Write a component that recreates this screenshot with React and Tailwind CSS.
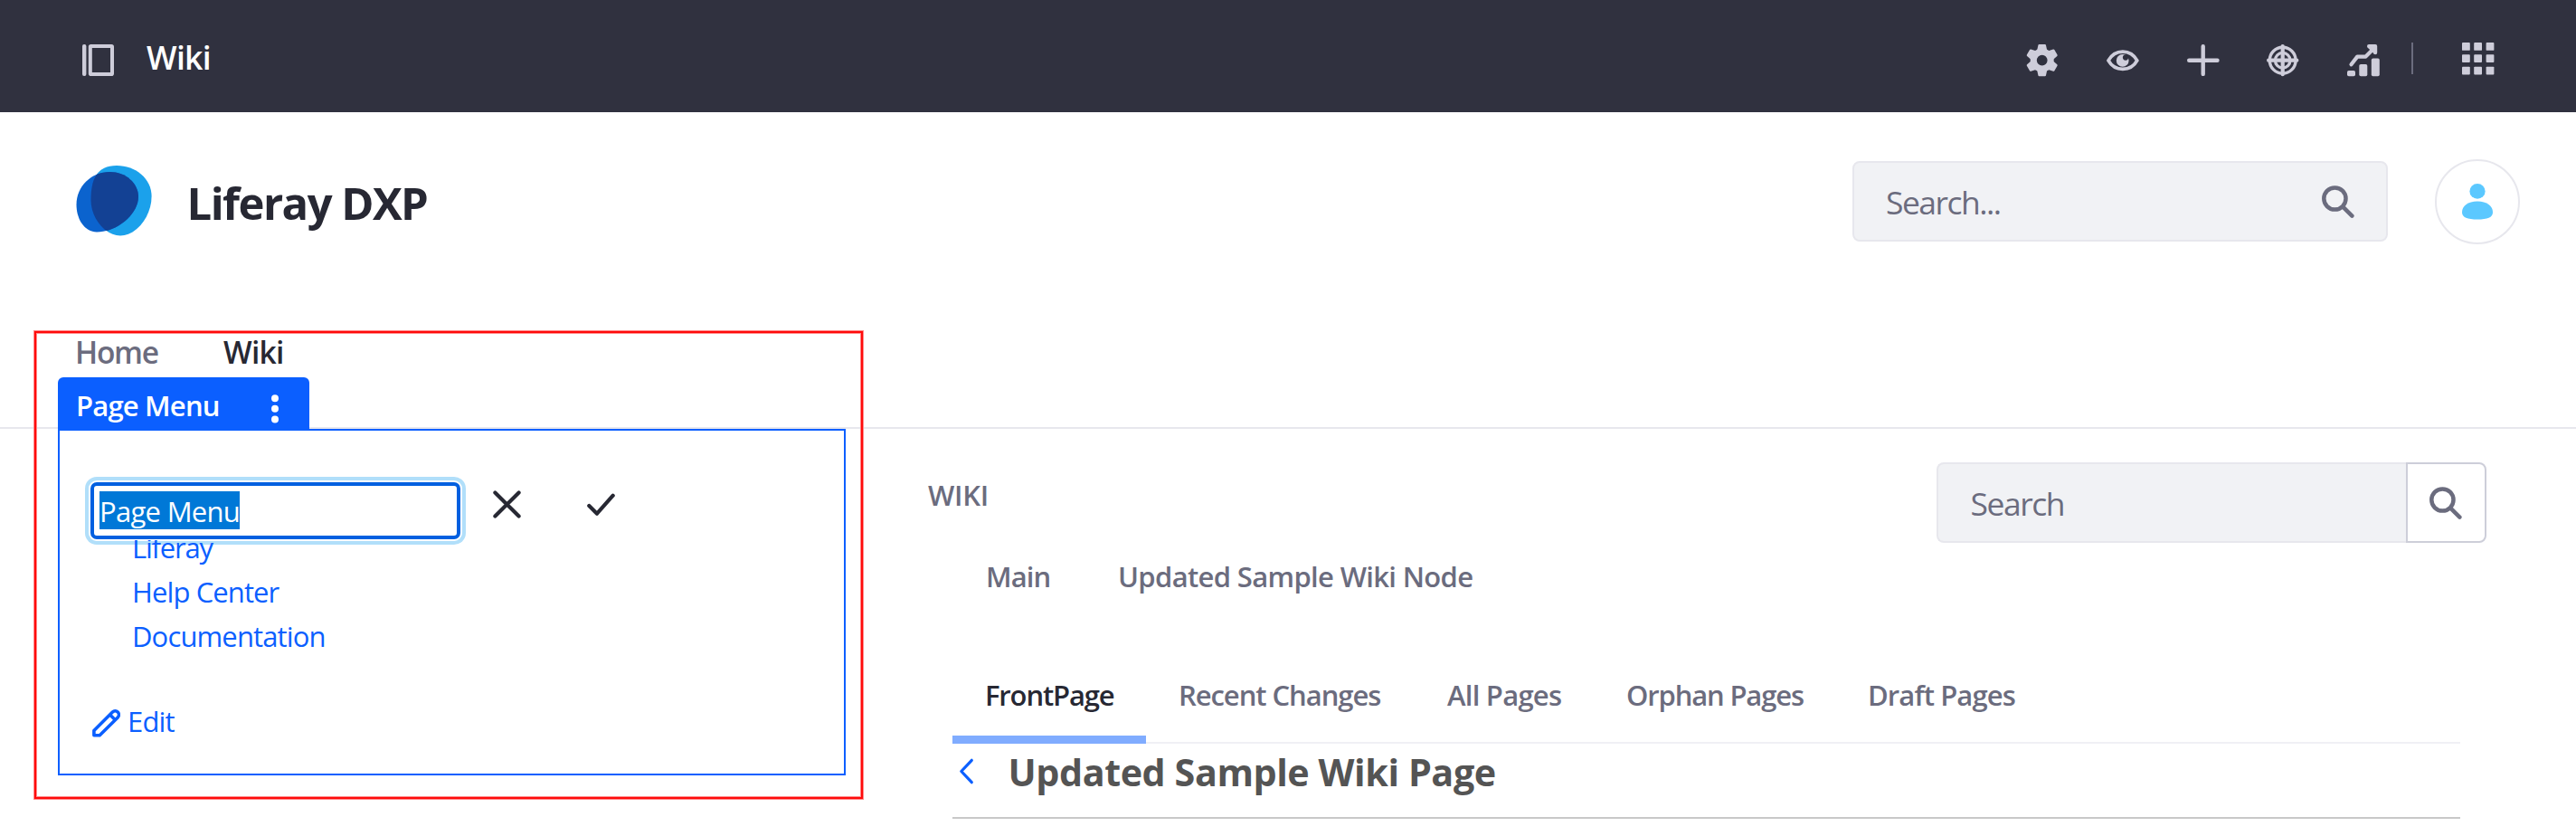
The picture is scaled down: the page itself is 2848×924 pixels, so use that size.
import React from "react";

const SidebarIcon = () => (
  <svg width="36" height="36" viewBox="0 0 36 36" className="text-[#cecdda]">
    <rect x="0" y="0" width="4.4" height="35" rx="2" fill="currentColor" />
    <rect x="8.8" y="2" width="24.2" height="31" rx="0.8" fill="none" stroke="currentColor" strokeWidth="4" strokeLinejoin="round" />
  </svg>
);

const GearIcon = () => (
  <svg width="36" height="36" viewBox="0 0 36 36" fill="#cecdda">
    <path
      fillRule="evenodd"
      d="M17.7 4.6a13 13 0 1 0 0 26 13 13 0 0 0 0-26Zm0 7.1a5.9 5.9 0 1 1 0 11.8 5.9 5.9 0 0 1 0-11.8Z"
    />
    {[0, 60, 120, 180, 240, 300].map((a) => (
      <path key={a} transform={`rotate(${a} 17.7 17.6)`} d="M13.4.9Q13.6 0 14.5 0H20.9Q21.8 0 22 .9L23.2 6.5H12.2Z" />
    ))}
  </svg>
);

const EyeIcon = () => (
  <svg width="36" height="36" viewBox="0 0 36 36" fill="none">
    <path d="M2 17.9C5.5 11.6 11 8.1 17.9 8.1S30.3 11.6 33.8 17.9C30.3 24.2 24.8 27.3 17.9 27.3S5.5 24.2 2 17.9Z" stroke="#cecdda" strokeWidth="3.8" strokeLinejoin="round" />
    <circle cx="17.7" cy="17.9" r="6.9" fill="#cecdda" />
    <circle cx="21" cy="14.6" r="3.1" fill="#30313f" />
  </svg>
);

const PlusIcon = () => (
  <svg width="36" height="36" viewBox="0 0 36 36" stroke="#cecdda" strokeWidth="4.4" strokeLinecap="round">
    <path d="M17.7 2.2V32.9M2.2 17.7H33.5" />
  </svg>
);

const TargetIcon = () => (
  <svg width="36" height="36" viewBox="0 0 36 36" fill="none" stroke="#cecdda">
    <circle cx="17.7" cy="17.7" r="14.4" strokeWidth="3.4" />
    <circle cx="17.7" cy="17.7" r="8.3" strokeWidth="3.2" />
    <path d="M17.7 2.1V33.2M2.1 17.7H33.3" strokeWidth="4.2" strokeLinecap="round" />
  </svg>
);

const ChartIcon = () => (
  <svg width="36" height="36" viewBox="0 0 36 36" fill="#cecdda">
    <rect x="0" y="29" width="9" height="6.2" rx="1.8" />
    <rect x="13.3" y="22" width="9" height="13.2" rx="1.8" />
    <rect x="26.8" y="15.6" width="9" height="19.6" rx="1.8" />
    <path d="M4.5 22.3L11.2 13.6H20.5L29.5 4.6" fill="none" stroke="#cecdda" strokeWidth="4.2" strokeLinecap="round" strokeLinejoin="round" />
    <path d="M24 0H31.2Q33.2 0 33.2 2V9.2Q33.2 11.2 31.2 11.2Q29.2 11.2 28.4 9L23 4Q22 3.6 22 2Q22 0 24 0Z" />
  </svg>
);

const GridIcon = () => (
  <svg width="36" height="36" viewBox="0 0 36 36" fill="#cecdda">
    {[0, 13.2, 26.7].map((y) =>
      [0, 13.2, 26.6].map((x) => <rect key={`${x}-${y}`} x={x} y={y} width="8.8" height="8.8" rx="0.9" />)
    )}
  </svg>
);

const SearchIcon = () => (
  <svg width="36" height="36" viewBox="0 0 36 36" fill="none" stroke="#6b6c7e" className="shrink-0">
    <circle cx="14.4" cy="14.5" r="12.1" strokeWidth="4.5" />
    <path d="M23.6 23.8L33.4 33.6" strokeWidth="4.5" strokeLinecap="round" />
  </svg>
);

const Logo = () => (
  <svg width="84" height="80" viewBox="84 182 84 80" className="shrink-0">
    <defs>
      <clipPath id="front">
        <path d="M84.5 226C84.5 206 101 190 121.5 190C139 190 153 202.5 153 217.5C153 237 129 256.5 107 256.5C94 256.5 84.5 243 84.5 226Z" />
      </clipPath>
    </defs>
    <path d="M129 183C150 183 167.6 197.5 167.6 217C167.6 239 151 260.5 133 260.5C117 260.5 100.5 242 100.5 221C100.5 198 107 183 129 183Z" fill="#1ba1eb" />
    <path d="M84.5 226C84.5 206 101 190 121.5 190C139 190 153 202.5 153 217.5C153 237 129 256.5 107 256.5C94 256.5 84.5 243 84.5 226Z" fill="#0b63ce" />
    <path clipPath="url(#front)" d="M129 183C150 183 167.6 197.5 167.6 217C167.6 239 151 260.5 133 260.5C117 260.5 100.5 242 100.5 221C100.5 198 107 183 129 183Z" fill="#134194" />
  </svg>
);

const UserIcon = () => (
  <svg width="34" height="40" viewBox="0 0 34 40" fill="#5bc8ff">
    <ellipse cx="17" cy="8.4" rx="8.6" ry="8.4" />
    <path d="M0 31.5C0 24.5 6.5 19.5 17 19.5S34 24.5 34 31.5C34 37.5 28 39.5 17 39.5S0 37.5 0 31.5Z" />
  </svg>
);

const PencilIcon = () => (
  <svg width="31" height="32" viewBox="0 0 31 32" fill="none" stroke="#0b5fff" strokeWidth="3.6" strokeLinejoin="round" className="shrink-0">
    <path d="M1.9 29.7V24.6L22.4 4.1A4.1 4.1 0 0 1 28.2 9.9L8.2 29.7Z" />
    <path d="M19.6 7L25.2 12.6" />
  </svg>
);

const tabs = [
  { label: "FrontPage", cls: "w-[214px] border-b-[9px] border-[#80acff] text-[#272833] tracking-[-1.14px]" },
  { label: "Recent Changes", cls: "w-[297px] tracking-[-1.06px]" },
  { label: "All Pages", cls: "w-[198px] tracking-[-0.74px]" },
  { label: "Orphan Pages", cls: "w-[267px] tracking-[-1.15px]" },
  { label: "Draft Pages", cls: "tracking-[-0.9px]" },
];

function ControlBar() {
  return (
    <header className="flex h-[124px] items-start bg-[#30313f] pr-[90px] pl-[91px]">
      <div className="pt-[49px]"><SidebarIcon /></div>
      <h1 className="ml-[35px] pt-[39px] text-[35.5px] leading-[48px] font-semibold tracking-[-0.67px] text-white">Wiki</h1>
      <div className="ml-auto flex gap-[52.75px] pt-[49px]">
        <GearIcon />
        <EyeIcon />
        <PlusIcon />
        <TargetIcon />
        <ChartIcon />
      </div>
      <div className="mt-[47px] ml-[35px] h-[35px] w-[2px] bg-[#6b6c7e]" />
      <div className="ml-[54px] pt-[47px]"><GridIcon /></div>
    </header>
  );
}

function SiteHeader() {
  return (
    <div className="flex h-[350px] flex-col border-b-2 border-[#e7e7ed]">
      <div className="flex h-[240px] items-start pr-[62px] pl-[84px]">
        <div className="mt-[58px]"><Logo /></div>
        <span className="mt-[70px] ml-[38.5px] text-[49px] leading-[60px] font-bold tracking-[-1.54px] text-[#272833]">Liferay DXP</span>
        <div className="mt-[54px] ml-auto flex h-[89px] w-[592px] items-center justify-between rounded-[8px] border-2 border-[#e7e7ed] bg-[#f1f2f5] pr-[35px] pl-[35px]">
          <span className="text-[35.5px] leading-[48px] tracking-[-1.53px] text-[#6b6c7e]">Search...</span>
          <SearchIcon />
        </div>
        <div className="mt-[52px] ml-[52px] flex h-[94px] w-[94px] items-center justify-center rounded-full border-2 border-[#e7e7ed]">
          <UserIcon />
        </div>
      </div>
      <nav className="flex pl-[83px] text-[33.5px] leading-[44px] font-semibold text-[#6b6c7e]">
        <a className="mt-[3px] w-[164px] tracking-[-1.27px]">Home</a>
        <a className="mt-[3px] tracking-[-0.7px] text-[#272833]">Wiki</a>
      </nav>
    </div>
  );
}

function PageMenu() {
  return (
    <section className="relative ml-[64px] h-[383px] w-[871px] border-2 border-[#0b5fff]">
      <div className="absolute -top-[59px] -left-[2px] flex h-[59px] w-[278px] rounded-t-[6px] bg-[#0b5fff] pr-[34px] pl-[20px]">
        <span className="mt-[9px] text-[31px] leading-[44px] font-semibold tracking-[-0.81px] whitespace-nowrap text-white">Page Menu</span>
        <svg width="8" height="32" viewBox="0 0 8 32" fill="#fff" className="mt-[18.5px] ml-auto">
          <circle cx="4" cy="4.2" r="4" />
          <circle cx="4" cy="15.8" r="4" />
          <circle cx="4" cy="27.5" r="4" />
        </svg>
      </div>
      <div className="flex pt-[57px] pl-[34px]">
        <div className="flex h-[63px] w-[409px] rounded-[7px] border-4 border-[#0060e0] bg-white pl-[6px] shadow-[0_0_0_2px_#fff,0_0_0_6px_#b1dffa]">
          <span className="mt-[6px] h-[42px] w-[155px] bg-[#0078d7] text-[31px] leading-[44px] tracking-[-0.7px] whitespace-nowrap text-white">Page Menu</span>
        </div>
        <svg width="31" height="31" viewBox="0 0 31 31" fill="none" stroke="#272833" strokeWidth="4.2" strokeLinecap="round" className="mt-[9px] ml-[36px]">
          <path d="M2.4 2.4L28.6 28.6M28.6 2.4L2.4 28.6" />
        </svg>
        <svg width="31" height="31" viewBox="0 0 31 31" fill="none" stroke="#272833" strokeWidth="4.2" strokeLinecap="round" strokeLinejoin="round" className="mt-[9px] ml-[73px]">
          <path d="M2.3 17L11 25.7L28.7 5.7" />
        </svg>
      </div>
      <ul className="relative -mt-[15px] ml-[80px] text-[31px] leading-[49px] text-[#0b5fff] [clip-path:inset(16px_0_0_0)]">
        <li className="tracking-[-1.2px]">Liferay</li>
        <li className="tracking-[-0.89px]">Help Center</li>
        <li className="tracking-[-0.87px]">Documentation</li>
      </ul>
      <a className="mt-[47px] ml-[36px] flex items-start text-[#0b5fff]">
        <span className="mt-[8px]"><PencilIcon /></span>
        <span className="ml-[8px] text-[31px] leading-[44px] tracking-[-0.8px]">Edit</span>
      </a>
    </section>
  );
}

function WikiContent() {
  return (
    <section className="ml-[91px] flex w-[1723px] flex-col pt-[37px]">
      <div className="flex justify-between">
        <h2 className="mt-[14px] text-[31px] leading-[44px] font-semibold tracking-[-0.23px] text-[#6b6c7e]">WIKI</h2>
        <div className="flex h-[89px] w-[608px]">
          <div className="flex flex-1 items-center rounded-l-[8px] border-2 border-r-0 border-[#e7e7ed] bg-[#f1f2f5] pl-[35.5px]">
            <span className="text-[35.5px] leading-[48px] tracking-[-1.47px] text-[#6b6c7e]">Search</span>
          </div>
          <div className="flex w-[89px] items-center rounded-r-[8px] border-2 border-[#cdced9] bg-white pl-[24px]">
            <SearchIcon />
          </div>
        </div>
      </div>
      <nav className="mt-[15px] ml-[64px] flex text-[31px] leading-[44px] font-semibold text-[#6b6c7e]">
        <a className="w-[146px] tracking-[-0.9px]">Main</a>
        <a className="tracking-[-0.66px]">Updated Sample Wiki Node</a>
      </nav>
      <nav className="mt-[87px] ml-[27px] flex h-[76px] w-[1667px] bg-[linear-gradient(#f0f0f5,#f0f0f5)] bg-[length:100%_2px] bg-bottom bg-no-repeat text-[31px] leading-[44px] font-semibold text-[#6b6c7e]">
        {tabs.map((t) => (
          <a key={t.label} className={`pl-[36px] whitespace-nowrap ${t.cls}`}>{t.label}</a>
        ))}
      </nav>
      <div className="ml-[27px] flex h-[83px] w-[1667px] border-b-2 border-[#c8c8c8]">
        <svg width="17" height="29" viewBox="0 0 17 29" fill="none" stroke="#0b5fff" strokeWidth="3.2" strokeLinecap="round" strokeLinejoin="round" className="mt-[16px] ml-[7px]">
          <path d="M14.3 2.3L2.8 14.5L14.3 26.7" />
        </svg>
        <h3 className="mt-[6px] ml-[37.5px] text-[41.3px] leading-[50px] font-bold tracking-[-0.44px] text-[#545454]">Updated Sample Wiki Page</h3>
      </div>
    </section>
  );
}

export default function App() {
  return (
    <div className="relative h-[924px] w-[2848px] overflow-hidden bg-white font-['Open_Sans','Noto_Sans',sans-serif]">
      <ControlBar />
      <SiteHeader />
      <main className="flex items-start">
        <PageMenu />
        <WikiContent />
      </main>
      <div className="pointer-events-none absolute top-[366px] left-[38px] h-[517px] w-[916px] border-2 border-[#ff0b0b] shadow-[0_0_0_1px_#ff8a8a,inset_0_0_0_1px_#ff8a8a]" />
    </div>
  );
}
